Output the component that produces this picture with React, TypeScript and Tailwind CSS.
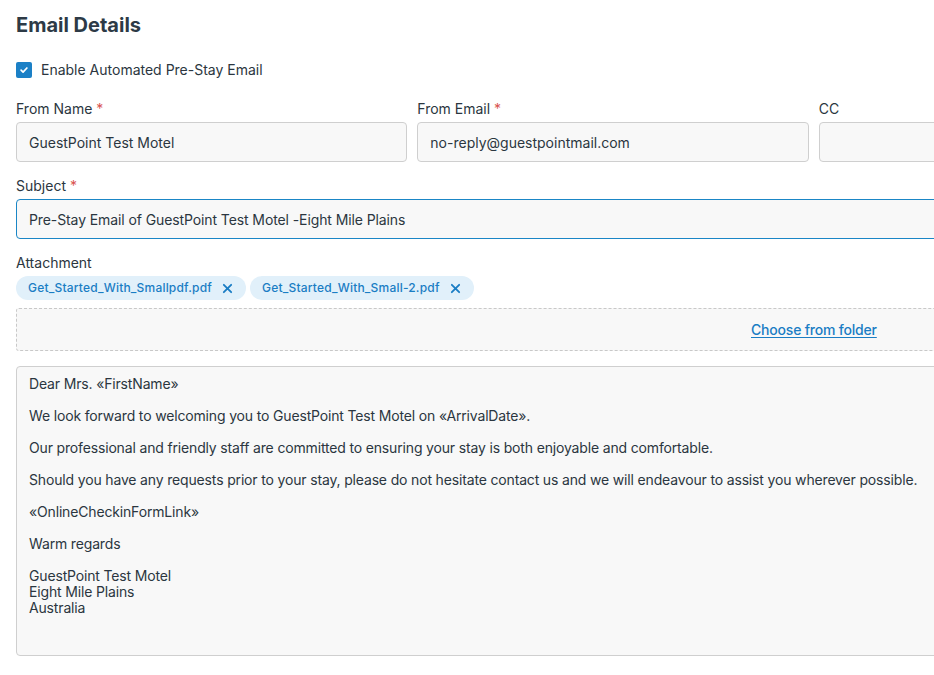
const FIELDS = [
  { label: 'From Name', required: true, value: 'GuestPoint Test Motel' },
  { label: 'From Email', required: true, value: 'no-reply@guestpointmail.com' },
  { label: 'CC', required: false, value: '' },
];

const FILES = ['Get_Started_With_Smallpdf.pdf', 'Get_Started_With_Small-2.pdf'];

function Label({ text, required }: { text: string; required?: boolean }) {
  return (
    <div className="text-[14px] leading-[16px] text-[#2b3640] mb-[5px]">
      {text}
      {required && <span className="text-[#d9534f]"> *</span>}
    </div>
  );
}

export default function App() {
  return (
    <div className="w-[934px] h-[675px] overflow-hidden bg-white text-[#2b3640]" style={{ fontFamily: 'Inter, "Noto Sans", sans-serif' }}>
      <div className="w-[1194px] ml-4 pt-[13px]">
        <h1 className="text-[20px] leading-[24px] font-bold text-[#2d3a46]">Email Details</h1>

        <label className="flex items-center gap-[9px] mt-[25px] h-4">
          <span className="w-4 h-4 rounded-[2px] bg-[#1b80c6] flex items-center justify-center">
            <svg className="w-[10px] h-[10px]" viewBox="0 0 12 12" fill="none" stroke="white" strokeWidth={2} strokeLinecap="round" strokeLinejoin="round">
              <path d="M2.5 6.2l2.4 2.4 4.6-5" />
            </svg>
          </span>
          <span className="text-[14px] leading-[16px]">Enable Automated Pre-Stay Email</span>
        </label>

        {/* sender row */}
        <div className="grid grid-cols-3 gap-[10px] mt-[23px]">
          {FIELDS.map((f) => (
            <div key={f.label}>
              <Label text={f.label} required={f.required} />
              <div className="h-[40px] rounded-[4px] border border-[#cfcfcf] bg-[#f8f8f8] px-3 flex items-center text-[14px]">
                {f.value}
              </div>
            </div>
          ))}
        </div>

        <div className="mt-[16px]">
          <Label text="Subject" required />
          <div className="h-[40px] rounded-[4px] border border-[#1a86c6] bg-[#f8f8f8] px-3 flex items-center text-[14px] tracking-[-0.1px]">
            Pre-Stay Email of GuestPoint Test Motel -Eight Mile Plains
          </div>
        </div>

        <div className="mt-[16px]">
          <Label text="Attachment" />
          <div className="flex gap-1">
            {FILES.map((name) => (
              <span key={name} className="h-6 rounded-full bg-[#e1f0fa] pl-3 pr-[13px] flex items-center gap-[10px] text-[12px] font-medium tracking-[0.2px] text-[#1a7dc4]">
                {name}
                <svg className="w-[11px] h-[11px]" viewBox="0 0 12 12" fill="none" stroke="currentColor" strokeWidth={2} strokeLinecap="round">
                  <path d="M2 2l8 8M10 2l-8 8" />
                </svg>
              </span>
            ))}
          </div>
          <div className="mt-[8px] h-[43px] border border-dashed border-[#c8c8c8] rounded-[3px] bg-[#f8f8f8] flex items-center pl-[734px]">
            <a className="text-[14px] font-medium tracking-[-0.2px] text-[#1a7dc4] underline underline-offset-2">Choose from folder</a>
          </div>
        </div>

        <div className="mt-[15px] h-[290px] rounded-[4px] border border-[#cfcfcf] bg-[#f8f8f8] px-3 pt-[9px] text-[14px] leading-[16px] tracking-[-0.16px] text-[#2b3640]">
          <p>Dear Mrs. «FirstName»</p>
          <p className="mt-4">We look forward to welcoming you to GuestPoint Test Motel on «ArrivalDate».</p>
          <p className="mt-4">Our professional and friendly staff are committed to ensuring your stay is both enjoyable and comfortable.</p>
          <p className="mt-4">Should you have any requests prior to your stay, please do not hesitate contact us and we will endeavour to assist you wherever possible.</p>
          <p className="mt-4">«OnlineCheckinFormLink»</p>
          <p className="mt-4">Warm regards</p>
          <p className="mt-4">
            GuestPoint Test Motel
            <br />
            Eight Mile Plains
            <br />
            Australia
          </p>
        </div>
      </div>
    </div>
  );
}
